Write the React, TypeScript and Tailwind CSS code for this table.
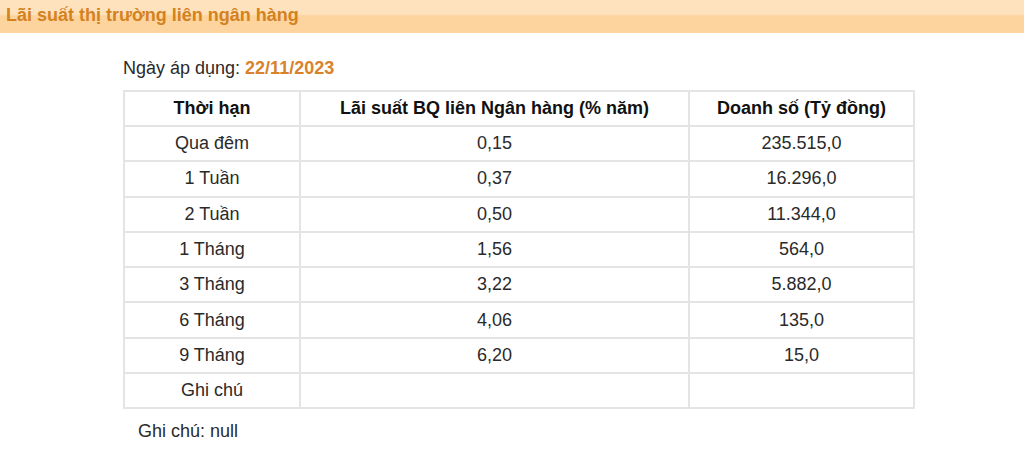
const rows: [string, string, string][] = [
  ["Qua đêm", "0,15", "235.515,0"],
  ["1 Tuần", "0,37", "16.296,0"],
  ["2 Tuần", "0,50", "11.344,0"],
  ["1 Tháng", "1,56", "564,0"],
  ["3 Tháng", "3,22", "5.882,0"],
  ["6 Tháng", "4,06", "135,0"],
  ["9 Tháng", "6,20", "15,0"],
  ["Ghi chú", "", ""],
];

export default function App() {
  return (
    <div className="w-[1024px] h-[457px] bg-white font-['Liberation_Sans',Arial,sans-serif] text-[#2a2a2a]">
      <div className="h-[33px] bg-[linear-gradient(to_bottom,#fde2bd_0px,#fde2bd_14px,#fdd39e_16px,#fdd39e_33px)]">
        <h2 className="pl-[6px] pt-[3px] text-[18px] leading-[24px] font-bold text-[#d4821e]">
          Lãi suất thị trường liên ngân hàng
        </h2>
      </div>

      <div className="pl-[123px] pt-[23px]">
        <p className="text-[18px] leading-[24px]">
          Ngày áp dụng: <span className="font-bold text-[#d9822b]">22/11/2023</span>
        </p>
        <table className="mt-[10px] border-separate border-spacing-0 text-[18px] border border-[#e4e4e4]">
          <thead>
            <tr className="h-[35px]">
              <th className="w-[176px] border border-[#e4e4e4] font-bold text-[#111]">Thời hạn</th>
              <th className="w-[389px] border border-[#e4e4e4] font-bold text-[#111]">
                Lãi suất BQ liên Ngân hàng (% năm)
              </th>
              <th className="w-[225px] border border-[#e4e4e4] font-bold text-[#111]">Doanh số (Tỷ đồng)</th>
            </tr>
          </thead>
          <tbody>
            {rows.map((r) => (
              <tr key={r[0]} className="h-[35.3px]">
                <td className="border border-[#e4e4e4] text-center">{r[0]}</td>
                <td className="border border-[#e4e4e4] text-center">{r[1]}</td>
                <td className="border border-[#e4e4e4] text-center">{r[2]}</td>
              </tr>
            ))}
          </tbody>
        </table>
        <p className="pl-[15px] pt-[10px] text-[18px] leading-[24px]">Ghi chú: null</p>
      </div>
    </div>
  );
}
